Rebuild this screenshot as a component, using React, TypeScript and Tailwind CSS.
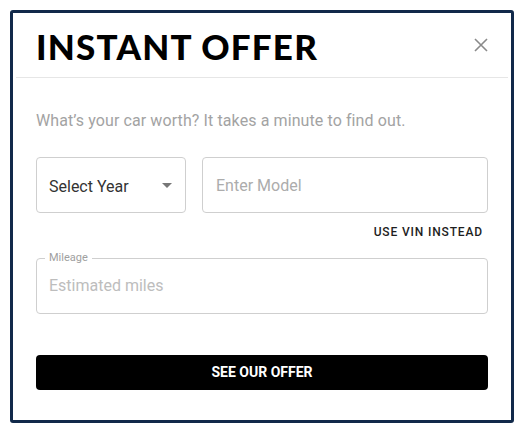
import { useState } from "react";

const roboto = { fontFamily: "Roboto, 'Liberation Sans', sans-serif" };

/**
 * Instant offer modal
 *
 * Year / model / mileage form with a single submit button.
 */
export default function App() {
	const [year, setYear] = useState("");

	return (
		<div className="min-h-screen bg-white p-[10px]" style={roboto}>
			<div className="flex h-[413px] w-[504px] flex-col rounded-[3px] border-[3px] border-[#11294a] bg-white">
				{/* ヘッダー */}
				<div className="flex h-[64px] items-start justify-between pl-[23px] pr-[22px] pt-[13px]">
					<h2
						className="text-[35px] font-black leading-[40px] tracking-[1.2px] text-black"
						style={{ fontFamily: "Lato, 'Noto Sans', sans-serif" }}
					>
						INSTANT OFFER
					</h2>
					<button type="button" className="mt-[11px] text-[#8a8a8a]" aria-label="close">
						<svg width="16" height="16" viewBox="0 0 16 16" fill="none" stroke="currentColor" strokeWidth="1.6">
							<path d="M2 2L14 14M14 2L2 14" />
						</svg>
					</button>
				</div>
				<div className="mx-[3px] h-px bg-[#e6e6e6]" />

				{/* フォーム */}
				<div className="flex flex-col px-[23px] pt-[32px]">
					<p className="text-[16px] leading-[22px] tracking-[0.1px] text-[#a3a3a3]">
						What’s your car worth? It takes a minute to find out.
					</p>

					<div className="mt-[25px] flex gap-[16px]">
						<div className="relative h-[56px] w-[150px] rounded-[4px] border border-[#cfcfcf]">
							<select
								value={year}
								onChange={(e) => setYear(e.target.value)}
								className="h-full w-full appearance-none bg-transparent pl-[12px] pt-[3px] text-[16px] text-[#333]"
							>
								<option value="">Select Year</option>
								<option value="2024">2024</option>
								<option value="2023">2023</option>
							</select>
							<span className="pointer-events-none absolute right-[13px] top-[25px] h-0 w-0 border-x-[5px] border-t-[5px] border-x-transparent border-t-[#777]" />
						</div>
						<input
							type="text"
							placeholder="Enter Model"
							className="h-[56px] flex-1 rounded-[4px] border border-[#cfcfcf] px-[13px] text-[16px] text-[#333] placeholder:text-[#acacac]"
						/>
					</div>

					<div className="mt-[12px] flex justify-end pr-[5px]">
						<button
							type="button"
							className="text-[12px] font-medium leading-[14px] tracking-[0.85px] text-[#1e1e1e]"
						>
							USE VIN INSTEAD
						</button>
					</div>

					<fieldset className="mt-[13px] h-[62px] rounded-[4px] border border-[#cfcfcf] px-[8px]">
						<legend className="px-[4px] text-[11px] leading-[12px] text-[#a0a0a0]">Mileage</legend>
						<input
							type="text"
							placeholder="Estimated miles"
							className="h-[42px] w-full px-[4px] text-[16px] text-[#333] placeholder:text-[#bdbdbd] focus:outline-none"
						/>
					</fieldset>

					<button
						type="button"
						className="mt-[41px] h-[35px] w-full rounded-[4px] bg-black text-[14px] font-bold text-white"
					>
						SEE OUR OFFER
					</button>
				</div>
			</div>
		</div>
	);
}
